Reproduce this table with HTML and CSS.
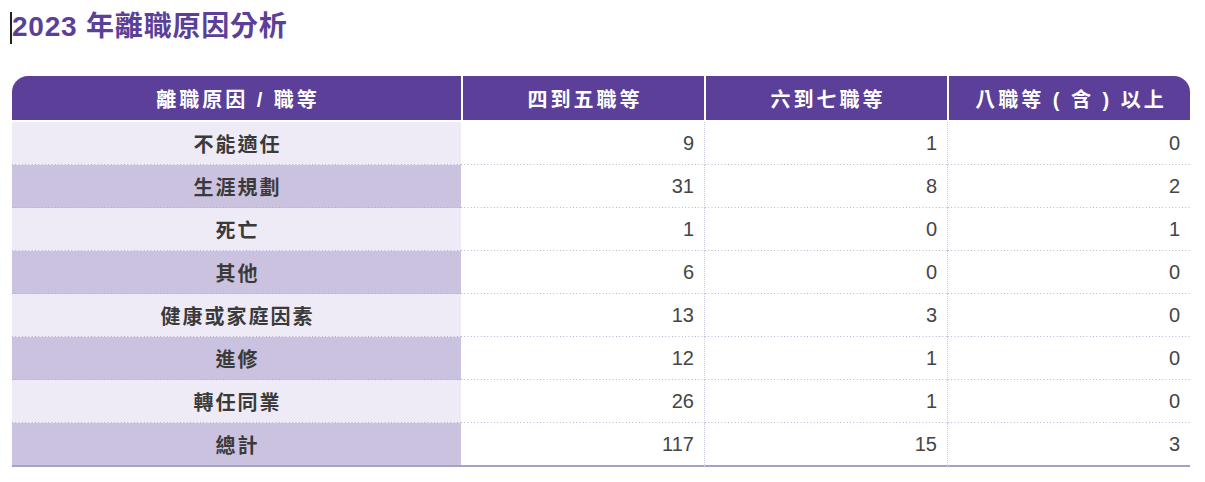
FILE: index.html
```html
<!DOCTYPE html>
<html lang="zh-Hant">
<head>
<meta charset="utf-8">
<title>2023 年離職原因分析</title>
<link rel="stylesheet" href="styles.css">
</head>
<body>
<div class="page">
  <h1 class="title"><span class="caret"></span>2023 年離職原因分析</h1>
  <table class="report">
    <colgroup>
      <col class="c1"><col class="c2"><col class="c3"><col class="c4">
    </colgroup>
    <thead>
      <tr>
        <th class="first">離職原因 / 職等</th>
        <th>四到五職等</th>
        <th>六到七職等</th>
        <th class="last">八職等 ( 含 ) 以上</th>
      </tr>
    </thead>
    <tbody>
      <tr class="odd"><td class="label">不能適任</td><td>9</td><td>1</td><td>0</td></tr>
      <tr class="even"><td class="label">生涯規劃</td><td>31</td><td>8</td><td>2</td></tr>
      <tr class="odd"><td class="label">死亡</td><td>1</td><td>0</td><td>1</td></tr>
      <tr class="even"><td class="label">其他</td><td>6</td><td>0</td><td>0</td></tr>
      <tr class="odd"><td class="label">健康或家庭因素</td><td>13</td><td>3</td><td>0</td></tr>
      <tr class="even"><td class="label">進修</td><td>12</td><td>1</td><td>0</td></tr>
      <tr class="odd"><td class="label">轉任同業</td><td>26</td><td>1</td><td>0</td></tr>
      <tr class="even total"><td class="label">總計</td><td>117</td><td>15</td><td>3</td></tr>
    </tbody>
  </table>
</div>
</body>
</html>
```
FILE: styles.css
```css
html, body {
  margin: 0;
  padding: 0;
  background: #ffffff;
}
body {
  font-family: "Liberation Sans", "Noto Sans CJK TC", sans-serif;
  color: #3b3b3b;
}
.page {
  padding: 9px 15px 0 12px;
}
.title {
  position: relative;
  margin: 0;
  font-size: 28px;
  line-height: 36px;
  font-weight: 700;
  color: #5b3f98;
  height: 36px;
  letter-spacing: 0.8px;
}
.caret {
  position: absolute;
  left: -2px;
  top: 3px;
  width: 1.5px;
  height: 32px;
  background: #222;
}
.report {
  margin-top: 31px;
  width: 1178px;
  border-collapse: separate;
  border-spacing: 0;
  table-layout: fixed;
}
.c1 { width: 449px; }
.c2 { width: 243px; }
.c3 { width: 243px; }
.c4 { width: 243px; }
th {
  background: #5b3f98;
  color: #ffffff;
  font-size: 20px;
  font-weight: 700;
  letter-spacing: 3px;
  height: 44px;
  padding: 0 0 0 3px;
  text-align: center;
  border-left: 2px solid #ffffff;
  border-bottom: 2px solid #ffffff;
}
th.first {
  border-left: 0;
  border-top-left-radius: 16px;
}
th.last {
  border-top-right-radius: 16px;
}
td {
  height: 42px;
  padding: 0 10px 1px 0;
  font-size: 20px;
  text-align: right;
  color: #454545;
  background-image: linear-gradient(to right, #aea8cc 0, #aea8cc 1.2px, transparent 1.2px);
  background-size: 3.3px 1px;
  background-repeat: repeat-x;
  background-position: left bottom;
}
td + td + td {
  border-left: 1px dotted #cfcbe0;
}
td.label {
  text-align: center;
  padding: 0 0 1px 2px;
  font-size: 20px;
  letter-spacing: 2px;
  font-weight: 700;
  color: #3a3a3a;
}
tr.odd td.label { background-color: #eeebf6; }
tr.even td.label { background-color: #cbc2e0; }
tr.total td {
  background-image: none;
  border-bottom: 2px solid #a9a0c9;
  padding-bottom: 0;
}
```
